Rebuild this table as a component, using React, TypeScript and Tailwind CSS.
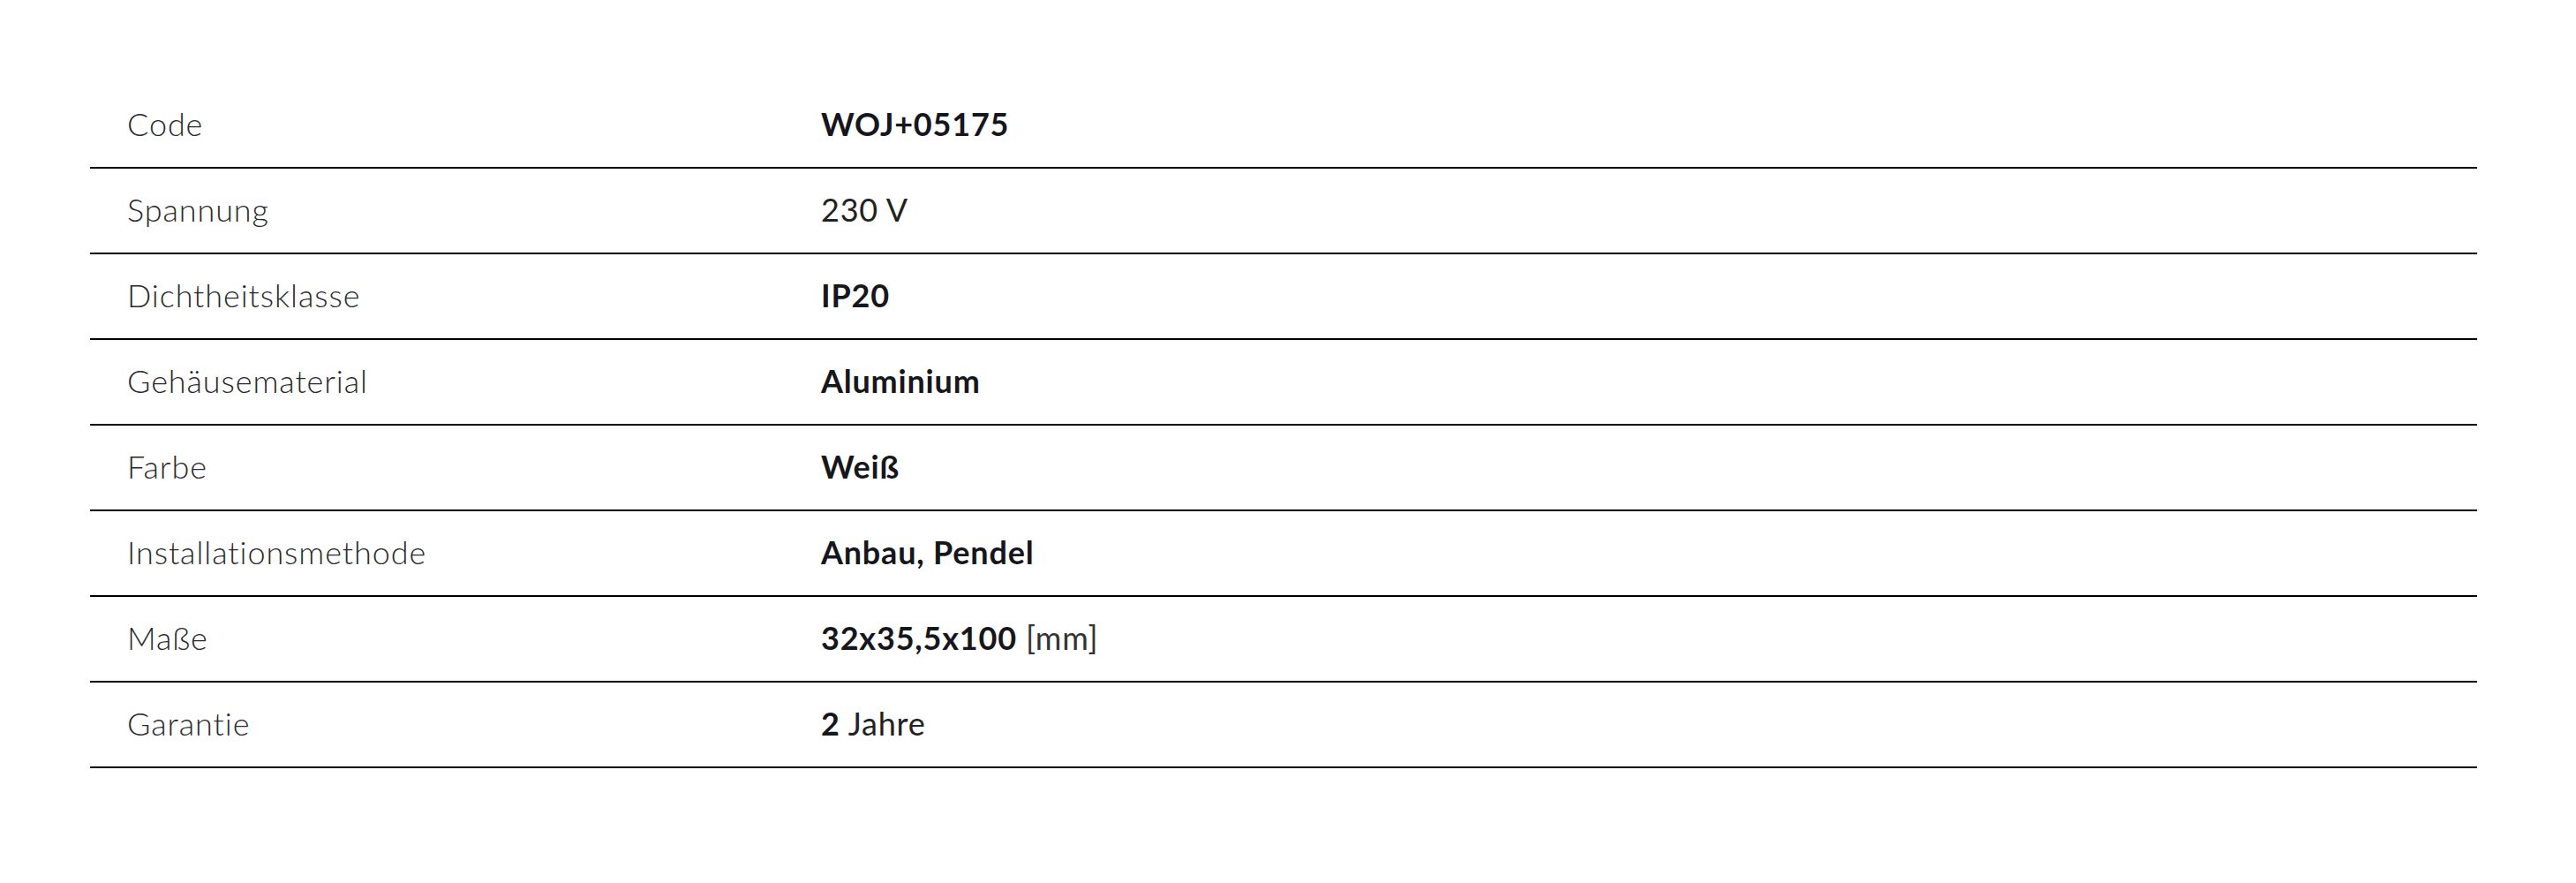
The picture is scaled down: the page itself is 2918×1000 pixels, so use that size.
import React from "react";

type Row = { label: string; value: React.ReactNode };

const rows: Row[] = [
  { label: "Code", value: <span className="font-bold text-[#16161d]">WOJ+05175</span> },
  { label: "Spannung", value: <span className="text-[#222]">230 V</span> },
  { label: "Dichtheitsklasse", value: <span className="font-bold text-[#16161d]">IP20</span> },
  { label: "Gehäusematerial", value: <span className="font-bold text-[#16161d]">Aluminium</span> },
  { label: "Farbe", value: <span className="font-bold text-[#16161d]">Weiß</span> },
  { label: "Installationsmethode", value: <span className="font-bold text-[#16161d]">Anbau, Pendel</span> },
  {
    label: "Maße",
    value: (
      <span>
        <span className="font-bold text-[#16161d]">32x35,5x100</span>
        <span className="text-[#333]"> [mm]</span>
      </span>
    ),
  },
  {
    label: "Garantie",
    value: (
      <span>
        <span className="font-bold text-[#16161d]">2</span>
        <span className="text-[#222]"> Jahre</span>
      </span>
    ),
  },
];

export default function App() {
  return (
    <div className="w-[2918px] h-[1000px] bg-white pt-[94px] pl-[102px] font-['Lato','Liberation_Sans',sans-serif]">
      <div className="w-[2704px] flex flex-col">
        {rows.map((r) => (
          <div
            key={r.label}
            className="flex items-center h-[97px] pb-[3px] border-b-2 border-black text-[36px] leading-none"
          >
            <div className="w-[828px] pl-[42px] font-light tracking-[0.9px] text-[#2a2a2e]">{r.label}</div>
            <div className="flex-1 tracking-[0.8px]">{r.value}</div>
          </div>
        ))}
      </div>
    </div>
  );
}
